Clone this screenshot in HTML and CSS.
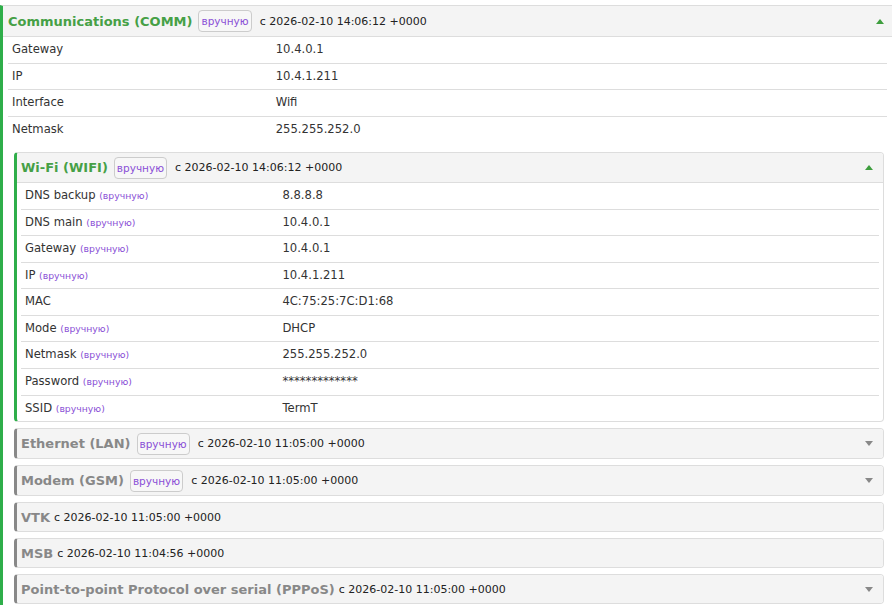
FILE: index.html
```html
<!DOCTYPE html>
<html>
<head>
<meta charset="utf-8">
<link rel="stylesheet" href="styles.css">
</head>
<body>
<div class="panel outer open">
  <div class="head">
    <span class="title">Communications (COMM)</span><span class="badge">вручную</span><span class="time">с 2026-02-10 14:06:12 +0000</span>
    <span class="caret up"></span>
  </div>
  <div class="body">
    <table class="props">
      <tr><td class="k">Gateway</td><td>10.4.0.1</td></tr>
      <tr><td class="k">IP</td><td>10.4.1.211</td></tr>
      <tr><td class="k">Interface</td><td>Wifi</td></tr>
      <tr><td class="k">Netmask</td><td>255.255.252.0</td></tr>
    </table>

    <div class="panel inner open">
      <div class="head">
        <span class="title">Wi-Fi (WIFI)</span><span class="badge">вручную</span><span class="time">с 2026-02-10 14:06:12 +0000</span>
        <span class="caret up"></span>
      </div>
      <table class="props">
        <tr><td class="k">DNS backup <span class="man">(вручную)</span></td><td>8.8.8.8</td></tr>
        <tr><td class="k">DNS main <span class="man">(вручную)</span></td><td>10.4.0.1</td></tr>
        <tr><td class="k">Gateway <span class="man">(вручную)</span></td><td>10.4.0.1</td></tr>
        <tr><td class="k">IP <span class="man">(вручную)</span></td><td>10.4.1.211</td></tr>
        <tr><td class="k">MAC</td><td>4C:75:25:7C:D1:68</td></tr>
        <tr><td class="k">Mode <span class="man">(вручную)</span></td><td>DHCP</td></tr>
        <tr><td class="k">Netmask <span class="man">(вручную)</span></td><td>255.255.252.0</td></tr>
        <tr><td class="k">Password <span class="man">(вручную)</span></td><td>*************</td></tr>
        <tr><td class="k">SSID <span class="man">(вручную)</span></td><td>TermT</td></tr>
      </table>
    </div>

    <div class="panel inner closed with-badge">
      <div class="head">
        <span class="title">Ethernet (LAN)</span><span class="badge">вручную</span><span class="time">с 2026-02-10 11:05:00 +0000</span>
        <span class="caret down"></span>
      </div>
    </div>
    <div class="panel inner closed with-badge">
      <div class="head">
        <span class="title">Modem (GSM)</span><span class="badge">вручную</span><span class="time">с 2026-02-10 11:05:00 +0000</span>
        <span class="caret down"></span>
      </div>
    </div>
    <div class="panel inner closed">
      <div class="head">
        <span class="title">VTK</span><span class="time">с 2026-02-10 11:05:00 +0000</span>
      </div>
    </div>
    <div class="panel inner closed">
      <div class="head">
        <span class="title">MSB</span><span class="time">с 2026-02-10 11:04:56 +0000</span>
      </div>
    </div>
    <div class="panel inner closed">
      <div class="head">
        <span class="title">Point-to-point Protocol over serial (PPPoS)</span><span class="time">с 2026-02-10 11:05:00 +0000</span>
        <span class="caret down"></span>
      </div>
    </div>
  </div>
</div>
</body>
</html>
```

FILE: styles.css
```css
html, body {
  margin: 0;
  padding: 0;
  background: #fff;
}
body {
  padding-top: 5px;
  font-family: "DejaVu Sans", "Noto Sans", sans-serif;
  font-size: 12px;
  color: #333;
  overflow: hidden;
}

.panel {
  background: #fff;
}
.outer {
  border-top: 1px solid #ddd;
  border-left: 3px solid #2fae4a;
  min-height: 700px;
}
.outer > .head {
  height: 30px;
  padding: 0 8px 0 5px;
  border-bottom: 1px solid #ddd;
}
.head {
  display: flex;
  align-items: center;
  background: #f4f4f4;
  white-space: nowrap;
}
.title {
  font-weight: bold;
  font-size: 13px;
  margin-right: 4px;
}
.open > .head .title { color: #46a046; }
.closed .title { color: #888; }

.badge {
  display: inline-block;
  height: 20px;
  line-height: 20px;
  padding: 0 2px;
  margin-left: 2px;
  margin-right: 8px;
  border: 1px solid #ccc;
  border-radius: 4px;
  color: #8a4fd6;
  background: #f7f7f7;
  font-size: 10.5px;
}
.time {
  font-size: 11px;
  color: #222;
}
.caret {
  margin-left: auto;
  width: 0;
  height: 0;
  border-left: 4px solid transparent;
  border-right: 4px solid transparent;
}
.caret.up { border-bottom: 5px solid #3e9e3e; }
.caret.down { border-top: 5px solid #888; }

.props {
  border-collapse: collapse;
  width: calc(100% - 10px);
  margin: 0 5px;
}
.props td {
  padding: 4px;
  line-height: 17.55px;
  border-top: 1px solid #ddd;
  vertical-align: top;
  font-size: 11.6px;
}
.props tr:first-child td { border-top: none; }
.props td.k { width: 30%; }
.man {
  font-size: 9.3px;
  color: #8a4fd6;
}

.inner {
  margin: 6px 8px 0 11px;
  border: 1px solid #ddd;
  border-left: 3px solid #888;
  border-radius: 4px;
  overflow: hidden;
}
.inner.open {
  margin-top: 10px;
  border-left-color: #2fae4a;
}
.inner > .head {
  height: 28px;
  padding: 0 10px 0 4px;
}
.inner.with-badge > .head {
  height: 29px;
}
.inner.open > .head {
  height: 29px;
  border-bottom: 1px solid #ddd;
}
.inner .props {
  width: calc(100% - 8px);
  margin: 0 4px;
}
```
